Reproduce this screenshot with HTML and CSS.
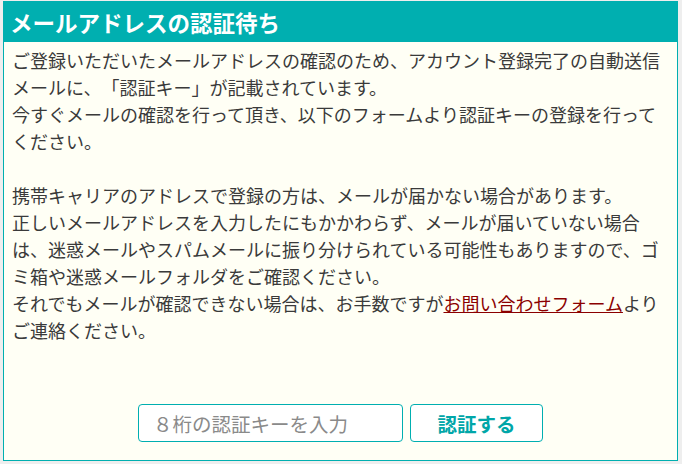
FILE: index.html
```html
<!DOCTYPE html>
<html lang="ja">
<head>
<meta charset="utf-8">
<title>メールアドレスの認証待ち</title>
<link rel="stylesheet" href="styles.css">
</head>
<body>
<div class="panel">
  <h1 class="panel-title">メールアドレスの認証待ち</h1>
  <div class="panel-body">
    <p class="message">ご登録いただいたメールアドレスの確認のため、アカウント登録完了の自動送信メールに、「認証キー」が記載されています。<br>今すぐメールの確認を行って頂き、以下のフォームより認証キーの登録を行ってください。<br><br>携帯キャリアのアドレスで登録の方は、メールが届かない場合があります。<br>正しいメールアドレスを入力したにもかかわらず、メールが届いていない場合は、迷惑メールやスパムメールに振り分けられている可能性もありますので、ゴミ箱や迷惑メールフォルダをご確認ください。<br>それでもメールが確認できない場合は、お手数ですが<a class="link" href="#">お問い合わせフォーム</a>よりご連絡ください。</p>
    <form class="verify-form">
      <input class="key-input" type="text" placeholder="８桁の認証キーを入力">
      <button class="verify-button" type="button">認証する</button>
    </form>
  </div>
</div>
</body>
</html>
```
FILE: styles.css
```css
html, body {
  margin: 0;
  padding: 0;
}
body {
  background: #eeeeee;
  padding: 1px 4px 3px 3px;
  font-family: "Noto Sans CJK JP", "Noto Sans", sans-serif;
  text-spacing-trim: space-all;
}
.panel {
  width: 675px;
  height: 460px;
  box-sizing: border-box;
  border: 1px solid #00afb0;
  background: #fffff5;
  display: flex;
  flex-direction: column;
}
.panel-title {
  margin: 0;
  height: 40px;
  background: #00afb0;
  color: #ffffff;
  font-size: 22.5px;
  font-weight: bold;
  line-height: 40px;
  padding-left: 6px;
  letter-spacing: 0;
}
.panel-body {
  padding: 5px 8px 18px;
  display: flex;
  flex-direction: column;
}
.message {
  margin: 0;
  font-size: 18px;
  line-height: 27px;
  color: #3a3a3a;
}
.link {
  color: #8b0000;
  text-decoration: underline;
}
.verify-form {
  margin: 60px 0 0;
  display: flex;
  justify-content: center;
  gap: 7px;
}
.key-input {
  width: 265px;
  height: 38px;
  box-sizing: border-box;
  border: 1px solid #00afb0;
  border-radius: 4px;
  background: #ffffff;
  padding: 0 14px;
  font-family: inherit;
  font-size: 19.5px;
  color: #333;
  outline: none;
}
.key-input::placeholder {
  color: #8a8a8a;
}
.verify-button {
  width: 133px;
  height: 38px;
  box-sizing: border-box;
  border: 1px solid #00afb0;
  border-radius: 4px;
  background: #ffffff;
  color: #00a6a8;
  font-family: inherit;
  font-size: 19.5px;
  font-weight: bold;
  padding: 0;
  cursor: pointer;
}
```
